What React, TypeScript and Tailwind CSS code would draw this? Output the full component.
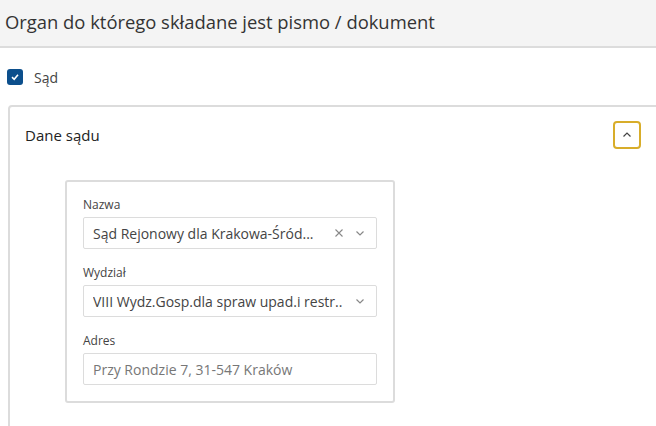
import React from 'react';

const font = { fontFamily: '"Open Sans", "Noto Sans", sans-serif' };

const Chevron = ({ up = false }: { up?: boolean }) => (
  <svg width="12" height="12" viewBox="0 0 12 12" fill="none" stroke="currentColor" strokeWidth="1.2">
    {up ? <path d="M2.5 7.5 6 4l3.5 3.5" /> : <path d="M2.5 4.5 6 8l3.5-3.5" />}
  </svg>
);

const Field = ({ label, children }: { label: string; children: React.ReactNode }) => (
  <div className="flex flex-col">
    <span className="text-[12px] leading-[16px] text-[#444] mb-[4px]">{label}</span>
    {children}
  </div>
);

const App = () => {
  return (
    <div className="w-[656px] h-[426px] overflow-hidden bg-white text-[#333]" style={font}>
      {/* Header */}
      <header className="h-[48px] bg-[#f4f4f4] border-b-2 border-[#dcdcdc] flex items-center px-[5px]">
        <h1 className="text-[18.4px] text-[#333] leading-none -mt-[2px]">Organ do którego składane jest pismo / dokument</h1>
      </header>

      {/* Checkbox */}
      <label className="flex items-center gap-[11px] pl-[7px] mt-[19px] h-[20px]">
        <span className="w-[16px] h-[16px] rounded-[3px] bg-[#0c4f8c] flex items-center justify-center">
          <svg width="10" height="10" viewBox="0 0 10 10" fill="none" stroke="white" strokeWidth="1.6">
            <path d="M2 5.2 4.2 7.3 8 2.8" />
          </svg>
        </span>
        <span className="text-[14px] text-[#444]">Sąd</span>
      </label>

      {/* Card */}
      <section className="ml-[8px] mr-[-10px] mt-[18px] border-2 border-[#dcdcdc] rounded-[4px] h-[340px]">
        <div className="flex items-center justify-between pl-[15px] pr-[23px] pt-[14px]">
          <h2 className="text-[15px] text-[#222]">Dane sądu</h2>
          <button className="w-[28px] h-[28px] border-2 border-[#d8ad2a] rounded-[4px] flex items-center justify-center text-[#444] bg-white">
            <Chevron up />
          </button>
        </div>

        <div className="ml-[55px] mt-[31px] w-[330px] border-2 border-[#dcdcdc] rounded-[3px] px-[16px] pt-[15px] pb-[16px] flex flex-col gap-[16px]">
          <Field label="Nazwa">
            <div className="h-[32px] border border-[#dcdcdc] rounded-[2px] flex items-center pl-[9px] pr-[10px] text-[14px] text-[#444]">
              <span className="flex-1 truncate">Sąd Rejonowy dla Krakowa-Śród...</span>
              <span className="text-[#888] text-[14px] mr-[10px]">
                <svg width="10" height="10" viewBox="0 0 10 10" stroke="currentColor" strokeWidth="1.1"><path d="M1.5 1.5 8.5 8.5M8.5 1.5 1.5 8.5" /></svg>
              </span>
              <span className="text-[#888]"><Chevron /></span>
            </div>
          </Field>
          <Field label="Wydział">
            <div className="h-[32px] border border-[#dcdcdc] rounded-[2px] flex items-center pl-[9px] pr-[10px] text-[14px] text-[#444]">
              <span className="flex-1 truncate">VIII Wydz.Gosp.dla spraw upad.i restr..</span>
              <span className="text-[#888] ml-[8px]"><Chevron /></span>
            </div>
          </Field>
          <Field label="Adres">
            <div className="h-[32px] border border-[#dcdcdc] rounded-[2px] flex items-center pl-[9px] text-[14px] text-[#777]">
              Przy Rondzie 7, 31-547 Kraków
            </div>
          </Field>
        </div>
      </section>
    </div>
  );
};

export default App;
